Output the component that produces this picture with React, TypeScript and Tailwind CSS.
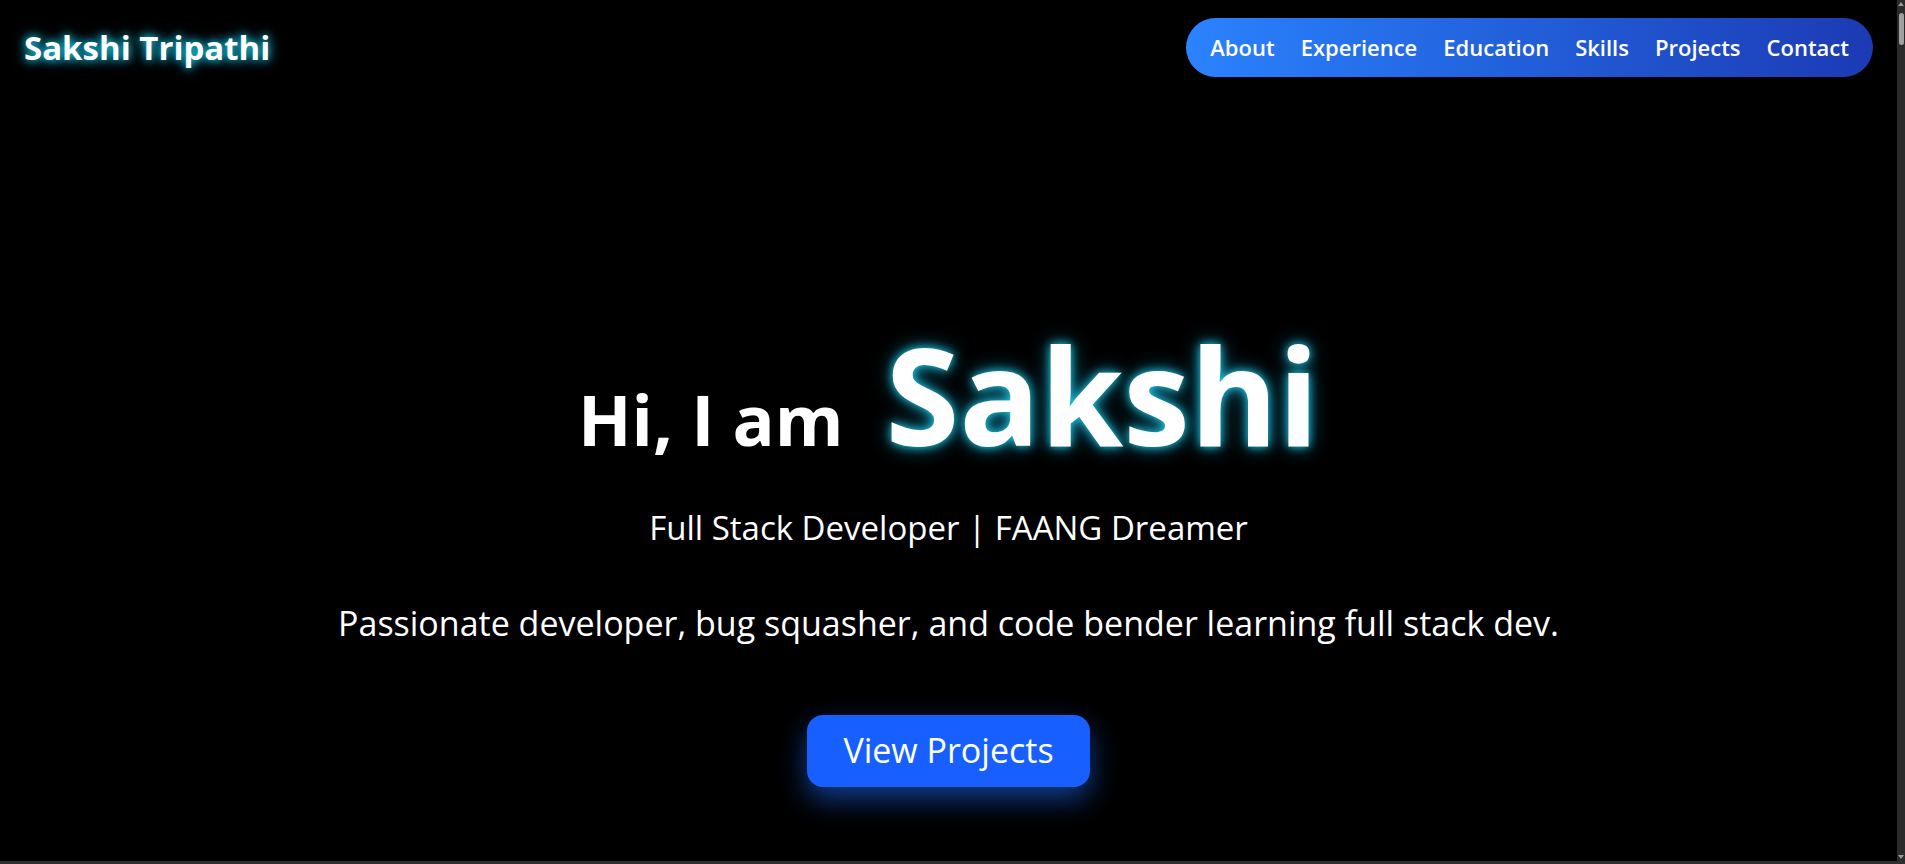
export default function App() {
  const links = ["About", "Experience", "Education", "Skills", "Projects", "Contact"];

  return (
    <div className="flex h-screen w-full flex-col overflow-hidden bg-black text-white" style={{ fontFamily: '"Segoe UI", "Open Sans", sans-serif' }}>
      <div className="flex min-h-0 flex-1">
        <div className="flex min-w-0 flex-1 flex-col">
          {/* Navbar */}
          <header className="flex items-center justify-between pl-6 pr-6 pt-[18px]">
            <h1 className="text-[33px] font-bold [text-shadow:0_0_8px_#22d3ee,0_0_14px_#0891b2]">Sakshi Tripathi</h1>
            <nav className="flex h-[59px] items-center gap-[26px] rounded-full bg-gradient-to-r from-[#2b82ff] to-[#1c3ab4] px-6">
              {links.map((l) => (
                <a key={l} href="#" className="text-[22px] font-semibold text-white">
                  {l}
                </a>
              ))}
            </nav>
          </header>

          {/* Hero */}
          <main className="flex flex-1 flex-col items-center pt-[250px] text-center">
            <h2 className="flex items-baseline gap-[42px] font-bold leading-none">
              <span className="text-[70px]">Hi, I am</span>
              <span className="text-[134px] [text-shadow:0_0_10px_#22d3ee,0_0_20px_#0e7490]">Sakshi</span>
            </h2>
            <p className="mt-[42px] text-[33px]">Full Stack Developer | FAANG Dreamer</p>
            <p className="mt-[45px] text-[34px]">Passionate developer, bug squasher, and code bender learning full stack dev.</p>
            <button className="mt-[66px] h-[72px] w-[283px] rounded-2xl bg-[#1760ff] text-[34px] text-white shadow-[0_12px_28px_rgba(30,110,255,0.55)]">
              View Projects
            </button>
          </main>
        </div>

        {/* window scrollbar */}
        <div className="flex w-2 flex-col items-center bg-[#2b2b2b]">
          <div className="mt-[2px] h-0 w-0 border-x-[3px] border-b-[4px] border-x-transparent border-b-[#9a9a9a]" />
          <div className="mt-[7px] h-[32px] w-[5px] rounded-full bg-[#9f9f9f]" />
          <div className="flex-1" />
          <div className="mb-[2px] h-0 w-0 border-x-[3px] border-t-[4px] border-x-transparent border-t-[#9a9a9a]" />
        </div>
      </div>
      <div className="h-[3px] bg-[#2f2f2f]" />
    </div>
  );
}
